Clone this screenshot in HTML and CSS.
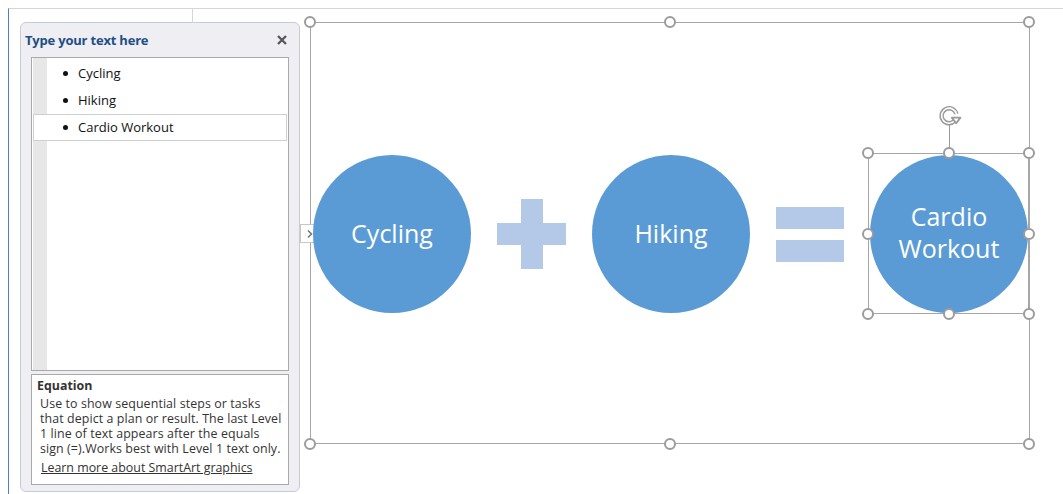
FILE: index.html
```html
<html>
<head>
  <title>SmartArt text pane</title>
  <meta name="viewport" content="width=device-width">
  <link rel="stylesheet" href="styles.css">
</head>
<body>

<div class="page">
  <div class="workspace">

    <aside class="text-pane">
      <header class="pane-head">
        <span class="pane-title">Type your text here</span>
        <svg class="pane-close" width="10" height="10" viewBox="0 0 10 10"><path d="M1 1L9 9M9 1L1 9" stroke="#555" stroke-width="2.2"/></svg>
      </header>
      <ul class="bullets">
        <li>Cycling</li>
        <li>Hiking</li>
        <li class="current">Cardio Workout</li>
      </ul>
      <div class="pane-info">
        <h4>Equation</h4>
        <p>Use to show sequential steps or tasks<br>that depict a plan or result. The last Level<br>1 line of text appears after the equals<br>sign (=).Works best with Level 1 text only.</p>
        <a href="#">Learn more about SmartArt graphics</a>
      </div>
    </aside>

    <div class="frame">
      <span class="handle tl"></span><span class="handle tc"></span><span class="handle tr"></span>
      <span class="handle bl"></span><span class="handle bc"></span><span class="handle br"></span>
      <button class="pane-toggle">
        <svg width="8" height="10" viewBox="0 0 8 10"><path d="M2 1.5L5.5 5L2 8.5" fill="none" stroke="#777" stroke-width="1.6"/></svg>
      </button>

      <div class="node">Cycling</div>
      <div class="plus"></div>
      <div class="node">Hiking</div>
      <div class="equals"><span></span><span></span></div>
      <div class="node selected">Cardio<br>Workout
        <span class="sel-box"></span>
        <span class="rotate-stem"></span>
        <svg class="rotate" width="26" height="26" viewBox="0 0 26 26">
          <path d="M18.6 17.8A7.5 7.5 0 1 1 20.4 11" fill="none" stroke="#9a9a9a" stroke-width="4.4"/>
          <path d="M18.6 17.8A7.5 7.5 0 1 1 20.4 11" fill="none" stroke="#fff" stroke-width="1.6"/>
          <path d="M15.8 14.6L24.4 14.6L20.2 20.2Z" fill="#fff" stroke="#9a9a9a" stroke-width="1.8" stroke-linejoin="round"/>
        </svg>
        <span class="handle tl"></span><span class="handle tc"></span><span class="handle tr"></span>
        <span class="handle ml"></span><span class="handle mr"></span>
        <span class="handle bl"></span><span class="handle bc"></span><span class="handle br"></span>
      </div>
    </div>

  </div>
</div>

</body>
</html>
```

FILE: styles.css
```css
* { box-sizing: border-box; }
html, body { margin: 0; padding: 0; }
body { background: #fff; font-family: "Open Sans", "Noto Sans", sans-serif; color: #222; }

/* document edge */
.page { position: relative; margin: 8px 0 0 8px; height: 486px; border-top: 1px solid #d6d6d6; border-left: 1px solid #4f7fc6; }
.page::before { content: ""; position: absolute; left: 183px; top: 0; width: 1px; height: 14px; background: #d6d6d6; }
.workspace { display: flex; align-items: flex-start; gap: 10px; padding: 13px 0 0 11px; }

/* text pane */
.text-pane { width: 280px; height: 470px; background: #eeeef3; border: 1px solid #c4cdd6; border-radius: 6px; padding: 0 10px; display: flex; flex-direction: column; }
.pane-head { height: 33px; margin-bottom: 1px; display: flex; align-items: center; justify-content: space-between; margin-left: -6px; padding-right: 2px; }
.pane-title { font-size: 13px; font-weight: bold; color: #1f4f85; letter-spacing: -0.2px; }
.bullets { height: 314px; margin: 0; padding: 2px 1px; list-style: none; border: 1px solid #a9a9a9; background: #fff linear-gradient(#e7e7e7, #e7e7e7) 1px 0 / 14px 100% no-repeat; font-size: 13px; color: #111; }
.bullets li { height: 27px; display: flex; align-items: center; padding: 0 0 1px 29px; border: 1px solid transparent; }
.bullets li::before { content: ""; width: 5px; height: 5px; border-radius: 50%; background: #111; margin-right: 10px; }
.bullets li.current { background: #fff; border-color: #cfcfcf; }
.pane-info { height: 111px; margin-top: 3px; padding: 3px 5px; border: 1px solid #a9a9a9; background: #fff; font-size: 12.4px; line-height: 15px; color: #333; }
.pane-info h4 { margin: 0; font-size: 12.4px; font-weight: bold; color: #333; }
.pane-info p { margin: 3px 0 0 3px; letter-spacing: 0.1px; }
.pane-info a { display: block; margin: 4px 0 0 4px; color: #333; }

/* diagram frame */
.frame { position: relative; width: 720px; height: 422px; border: 1px solid #a6a6a6; display: flex; align-items: center; gap: 26px; padding: 2px 0 0 2px; }
.node { position: relative; flex: none; width: 158px; height: 158px; border-radius: 50%; background: #5b9bd5; color: #fff; display: flex; align-items: center; justify-content: center; text-align: center; font-size: 25px; line-height: 32px; padding-bottom: 3px; }
.node.selected { padding-bottom: 5px; }
.plus { flex: none; width: 69px; height: 70px; background: linear-gradient(#b4c8e8, #b4c8e8) center / 100% 22px no-repeat, linear-gradient(#b4c8e8, #b4c8e8) center / 22px 100% no-repeat; }
.equals { flex: none; width: 68px; display: flex; flex-direction: column; gap: 11px; }
.equals span { height: 22px; background: #b4c8e8; }

.pane-toggle { position: absolute; left: -11px; top: 201px; width: 19px; height: 19px; padding: 0; background: #fff; border: 1px solid #c8c8c8; display: flex; align-items: center; justify-content: center; }

/* selection handles */
.handle { position: absolute; width: 12px; height: 12px; margin: -6px 0 0 -6px; border: 2px solid #9b9b9b; border-radius: 50%; background: #fff; z-index: 2; }
.frame > .handle.tl { left: -1px; top: -1px; }
.frame > .handle.tc { left: 50%; top: -1px; }
.frame > .handle.tr { left: 100%; top: -1px; }
.frame > .handle.bl { left: -1px; top: calc(100% + 1px); }
.frame > .handle.bc { left: 50%; top: calc(100% + 1px); }
.frame > .handle.br { left: 100%; top: calc(100% + 1px); }

.sel-box { position: absolute; left: -2px; top: -2px; right: -1px; bottom: -1px; border: 1px solid #a6a6a6; }
.selected .handle.tl { left: -2px; top: -2px; }
.selected .handle.tc { left: 50%; top: -2px; }
.selected .handle.tr { left: calc(100% + 1px); top: -2px; }
.selected .handle.ml { left: -2px; top: 50%; }
.selected .handle.mr { left: calc(100% + 1px); top: 50%; }
.selected .handle.bl { left: -2px; top: calc(100% + 1px); }
.selected .handle.bc { left: 50%; top: calc(100% + 1px); }
.selected .handle.br { left: calc(100% + 1px); top: calc(100% + 1px); }
.rotate-stem { position: absolute; left: 50%; top: -32px; width: 1px; height: 30px; background: #9b9b9b; }
.rotate { position: absolute; left: calc(50% - 13px); top: -52px; }
```
